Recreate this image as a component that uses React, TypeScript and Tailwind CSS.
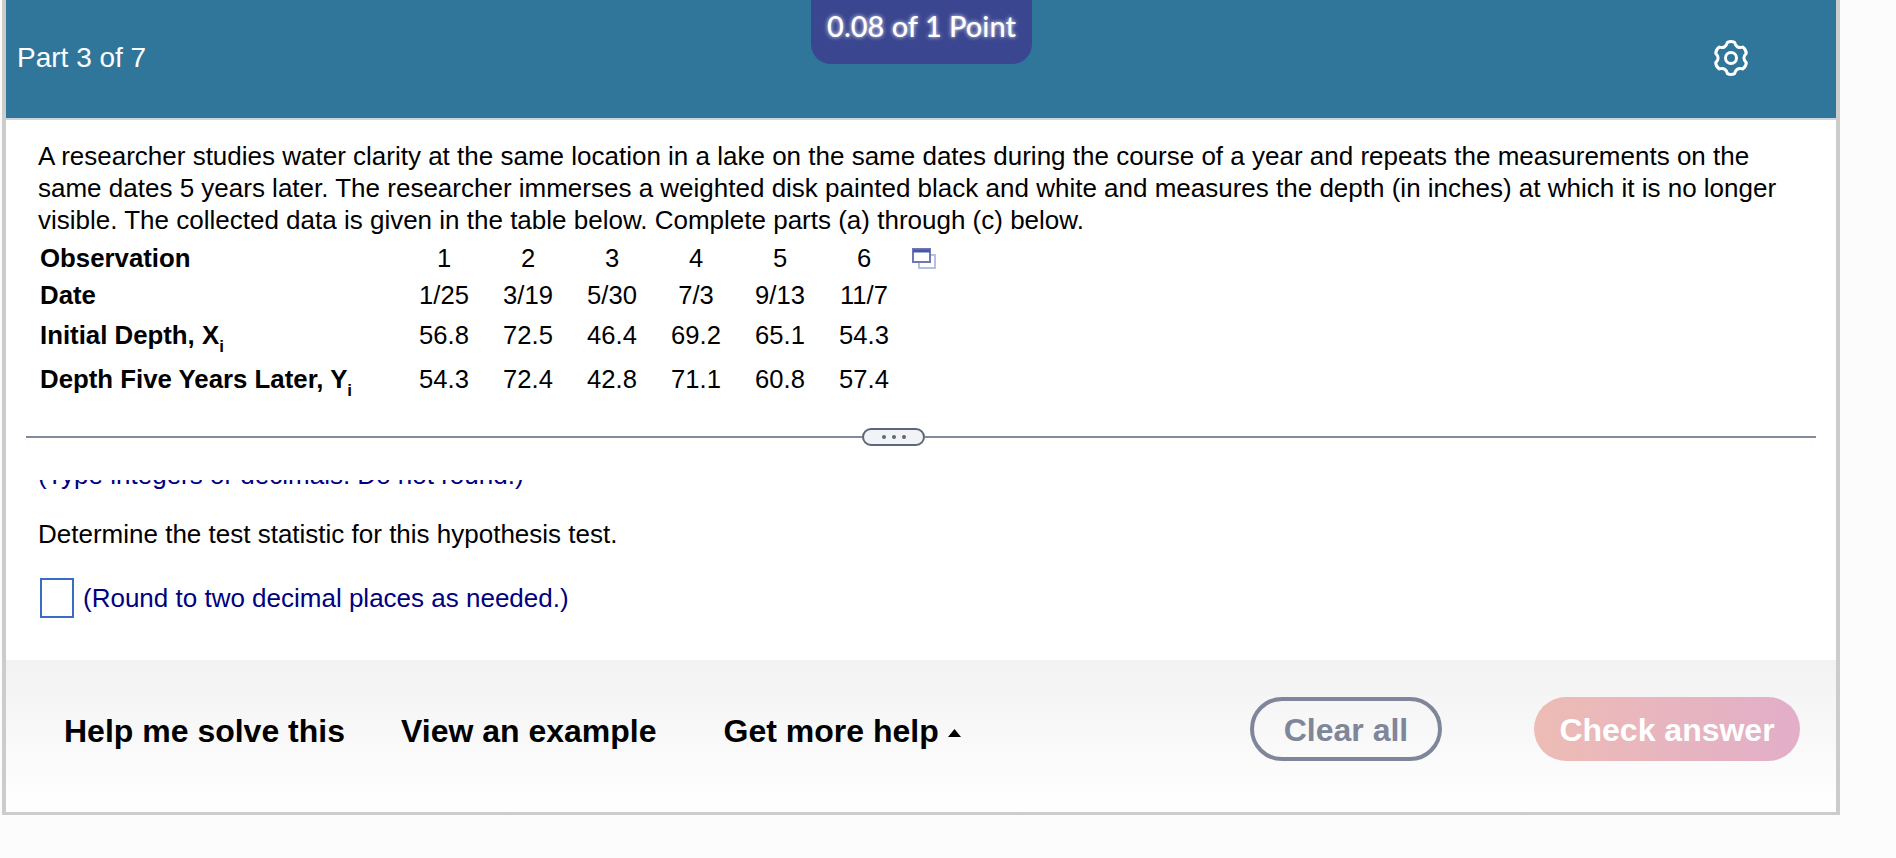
import React from 'react';

const columns = [
  { obs: '1', date: '1/25', x: '56.8', y: '54.3' },
  { obs: '2', date: '3/19', x: '72.5', y: '72.4' },
  { obs: '3', date: '5/30', x: '46.4', y: '42.8' },
  { obs: '4', date: '7/3', x: '69.2', y: '71.1' },
  { obs: '5', date: '9/13', x: '65.1', y: '60.8' },
  { obs: '6', date: '11/7', x: '54.3', y: '57.4' },
];

// six rounded teeth, one pointing straight up
function gearPath(cx: number, cy: number, outer: number, inner: number) {
  const pt = (deg: number, r: number) => {
    const a = ((deg - 90) * Math.PI) / 180;
    return `${(cx + r * Math.cos(a)).toFixed(2)} ${(cy + r * Math.sin(a)).toFixed(2)}`;
  };
  let d = `M${pt(-13, outer)}`;
  for (let k = 0; k < 6; k++) {
    const a = k * 60;
    d += ` Q${pt(a, outer + 1.4)} ${pt(a + 13, outer)}`;
    d += ` Q${pt(a + 30, inner - 1.5)} ${pt(a + 47, outer)}`;
  }
  return d + 'Z';
}

function DataRow({ label, sub, field, height }: { label: string; sub?: string; field: 'obs' | 'date' | 'x' | 'y'; height: string }) {
  return (
    <div className={`flex items-center ${height}`}>
      <div className="w-[362px] font-bold text-[25.8px]">
        {label}
        {sub && <sub className="text-[17px] leading-none align-[-4px] font-bold">{sub}</sub>}
      </div>
      {columns.map((c) => (
        <div key={c.obs} className="w-[84px] text-center">{c[field]}</div>
      ))}
    </div>
  );
}

export default function App() {
  return (
    <div className="w-[1896px] h-[858px] overflow-hidden bg-[#fcfcfc] pl-[2px] font-['Liberation_Sans',Arial,sans-serif] text-black">
      <div className="flex flex-col w-[1838px] h-[815px] bg-white border-x-4 border-b-[3px] border-[#cccccc]">
        {/* Header */}
        <div className="relative flex items-center justify-between h-[120px] shrink-0 bg-[#30769a] border-b-2 border-[#cfd3da] pl-[11px] pr-[86px] pb-[2px] text-white">
          <span className="text-[28px]">Part 3 of 7</span>
          <svg width="38" height="38" viewBox="0 0 38 38" fill="none" stroke="#fff" strokeWidth="3" strokeLinejoin="round">
            <path d={gearPath(19, 19, 16, 12)} />
            <circle cx="19" cy="19" r="5.5" />
          </svg>
          <div className="absolute left-[805px] top-0 flex items-center justify-center w-[221px] h-[64px] pb-[12px] rounded-b-[20px] bg-[#3a4690] font-['Lato',sans-serif] text-[29px] font-medium [text-shadow:0_0_4px_rgba(255,255,255,0.9)]">
            0.08 of 1 Point
          </div>
        </div>

        {/* Question */}
        <div className="pl-[32px] pr-[40px] pt-[20px] text-[26px] leading-[32px]">
          <p>
            A researcher studies water clarity at the same location in a lake on the same dates during the course of a year and repeats the measurements on the same dates 5 years later. The researcher immerses a weighted disk painted black and white and measures the depth (in inches) at which it is no longer visible. The collected data is given in the table below. Complete parts (a) through (c) below.
          </p>
          <div className="relative ml-[2px] mt-[3px] text-[25.6px]">
            <DataRow label="Observation" field="obs" height="h-[37px]" />
            <DataRow label="Date" field="date" height="h-[38px]" />
            <DataRow label="Initial Depth, X" sub="i" field="x" height="h-[42px]" />
            <DataRow label="Depth Five Years Later, Y" sub="i" field="y" height="h-[45px]" />
            <svg className="absolute left-[872px] top-[9px]" width="26" height="22" viewBox="0 0 26 22" fill="none">
              <rect x="7" y="7" width="16" height="13" stroke="#b8c0dc" strokeWidth="2" />
              <rect x="1" y="1" width="17" height="13" fill="#fff" stroke="#6c78b8" strokeWidth="2" />
              <path d="M1 3h17" stroke="#4a58a4" strokeWidth="3" />
            </svg>
          </div>
        </div>

        {/* Divider */}
        <div className="flex items-center ml-[20px] mr-[20px] mt-[27px] shrink-0">
          <div className="w-[836px] h-[2px] bg-[#828b9b]" />
          <div className="flex items-center justify-center gap-[6px] w-[63px] h-[18px] rounded-full border-2 border-[#5c6879] bg-[#f1f3f6]">
            <span className="w-[4px] h-[4px] rounded-full bg-[#5c6879]" />
            <span className="w-[4px] h-[4px] rounded-full bg-[#5c6879]" />
            <span className="w-[4px] h-[4px] rounded-full bg-[#5c6879]" />
          </div>
          <div className="flex-1 h-[2px] bg-[#828b9b]" />
        </div>

        {/* Scrolled answer area */}
        <div className="flex-1 overflow-hidden mt-[34px] pl-[32px] text-[26px] leading-[32px]">
          <p className="-mt-[21px] text-[#000080]">(Type integers or decimals. Do not round.)</p>
          <p className="mt-[27px]">Determine the test statistic for this hypothesis test.</p>
          <div className="flex items-center gap-[9px] mt-[28px] ml-[2px]">
            <div className="w-[34px] h-[40px] border-2 border-[#3b6cc4]" />
            <span className="text-[#000080]">(Round to two decimal places as needed.)</span>
          </div>
        </div>

        {/* Footer */}
        <div className="flex items-center justify-between h-[152px] shrink-0 pl-[58px] pr-[36px] pb-[14px] bg-gradient-to-b from-[#f2f2f2] to-white text-[32px] font-bold">
          <div className="flex items-center gap-[56px] pt-[3px]">
            <span>Help me solve this</span>
            <span>View an example</span>
            <span className="flex items-center gap-[9px] ml-[11px]">
              Get more help
              <svg width="13" height="8" viewBox="0 0 13 8" className="mt-[4px]"><path d="M6.5 0L13 8H0z" fill="#000" /></svg>
            </span>
          </div>
          <div className="flex items-center gap-[92px]">
            <div className="flex items-center justify-center w-[192px] h-[64px] pt-[1px] rounded-full border-4 border-[#80869a] text-[#80869a]">Clear all</div>
            <div className="flex items-center justify-center w-[266px] h-[64px] pt-[1px] rounded-full bg-gradient-to-r from-[#edbcb4] to-[#e2aec9] text-white">Check answer</div>
          </div>
        </div>
      </div>
    </div>
  );
}
